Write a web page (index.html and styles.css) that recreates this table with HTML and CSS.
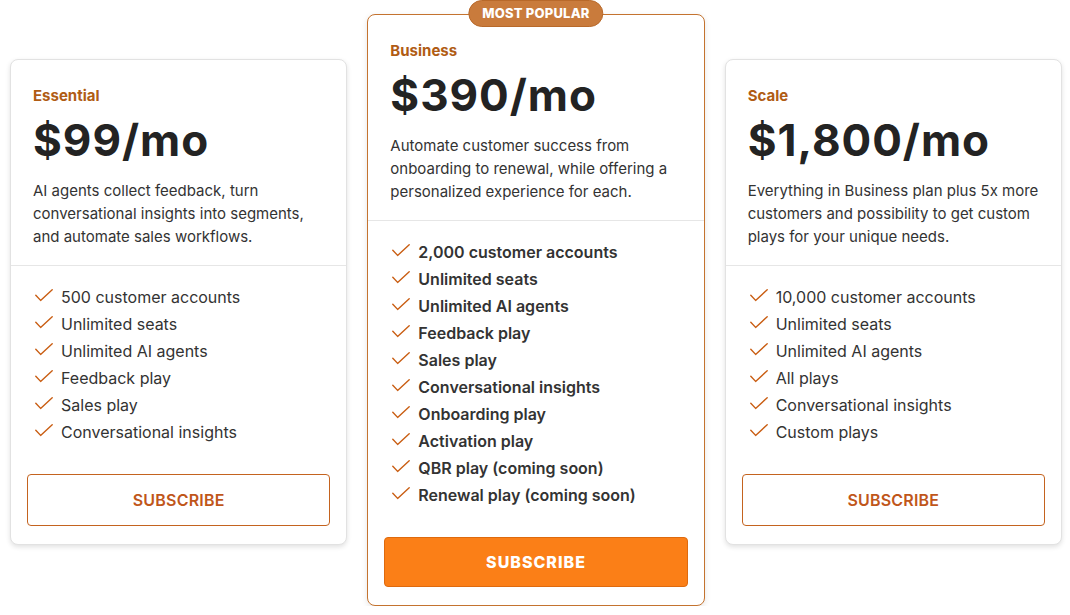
FILE: index.html
```html
<!DOCTYPE html>
<html lang="en">
<head>
<meta charset="utf-8">
<title>Pricing</title>
<link rel="stylesheet" href="styles.css">
</head>
<body>
<main class="plans">
  <section class="card side">
    <div class="head">
      <div class="tier">Essential</div>
      <div class="price">$99/mo</div>
      <p class="desc">AI agents collect feedback, turn conversational insights into segments, and automate sales workflows.</p>
    </div>
    <div class="body">
      <ul class="features">
        <li><svg class="chk" viewBox="0 0 18 13"><path d="M0.8 6.2 L5.6 11.4 L17.2 0.8"/></svg>500 customer accounts</li>
        <li><svg class="chk" viewBox="0 0 18 13"><path d="M0.8 6.2 L5.6 11.4 L17.2 0.8"/></svg>Unlimited seats</li>
        <li><svg class="chk" viewBox="0 0 18 13"><path d="M0.8 6.2 L5.6 11.4 L17.2 0.8"/></svg>Unlimited AI agents</li>
        <li><svg class="chk" viewBox="0 0 18 13"><path d="M0.8 6.2 L5.6 11.4 L17.2 0.8"/></svg>Feedback play</li>
        <li><svg class="chk" viewBox="0 0 18 13"><path d="M0.8 6.2 L5.6 11.4 L17.2 0.8"/></svg>Sales play</li>
        <li><svg class="chk" viewBox="0 0 18 13"><path d="M0.8 6.2 L5.6 11.4 L17.2 0.8"/></svg>Conversational insights</li>
      </ul>
      <button class="btn outline">SUBSCRIBE</button>
    </div>
  </section>

  <section class="card featured">
    <div class="badge">MOST POPULAR</div>
    <div class="head">
      <div class="tier">Business</div>
      <div class="price">$390/mo</div>
      <p class="desc">Automate customer success from onboarding to renewal, while offering a personalized experience for each.</p>
    </div>
    <div class="body">
      <ul class="features bold">
        <li><svg class="chk" viewBox="0 0 18 13"><path d="M0.8 6.2 L5.6 11.4 L17.2 0.8"/></svg>2,000 customer accounts</li>
        <li><svg class="chk" viewBox="0 0 18 13"><path d="M0.8 6.2 L5.6 11.4 L17.2 0.8"/></svg>Unlimited seats</li>
        <li><svg class="chk" viewBox="0 0 18 13"><path d="M0.8 6.2 L5.6 11.4 L17.2 0.8"/></svg>Unlimited AI agents</li>
        <li><svg class="chk" viewBox="0 0 18 13"><path d="M0.8 6.2 L5.6 11.4 L17.2 0.8"/></svg>Feedback play</li>
        <li><svg class="chk" viewBox="0 0 18 13"><path d="M0.8 6.2 L5.6 11.4 L17.2 0.8"/></svg>Sales play</li>
        <li><svg class="chk" viewBox="0 0 18 13"><path d="M0.8 6.2 L5.6 11.4 L17.2 0.8"/></svg>Conversational insights</li>
        <li><svg class="chk" viewBox="0 0 18 13"><path d="M0.8 6.2 L5.6 11.4 L17.2 0.8"/></svg>Onboarding play</li>
        <li><svg class="chk" viewBox="0 0 18 13"><path d="M0.8 6.2 L5.6 11.4 L17.2 0.8"/></svg>Activation play</li>
        <li><svg class="chk" viewBox="0 0 18 13"><path d="M0.8 6.2 L5.6 11.4 L17.2 0.8"/></svg>QBR play (coming soon)</li>
        <li><svg class="chk" viewBox="0 0 18 13"><path d="M0.8 6.2 L5.6 11.4 L17.2 0.8"/></svg>Renewal play (coming soon)</li>
      </ul>
      <button class="btn filled">SUBSCRIBE</button>
    </div>
  </section>

  <section class="card side">
    <div class="head">
      <div class="tier">Scale</div>
      <div class="price">$1,800/mo</div>
      <p class="desc">Everything in Business plan plus 5x more customers and possibility to get custom plays for your unique needs.</p>
    </div>
    <div class="body">
      <ul class="features">
        <li><svg class="chk" viewBox="0 0 18 13"><path d="M0.8 6.2 L5.6 11.4 L17.2 0.8"/></svg>10,000 customer accounts</li>
        <li><svg class="chk" viewBox="0 0 18 13"><path d="M0.8 6.2 L5.6 11.4 L17.2 0.8"/></svg>Unlimited seats</li>
        <li><svg class="chk" viewBox="0 0 18 13"><path d="M0.8 6.2 L5.6 11.4 L17.2 0.8"/></svg>Unlimited AI agents</li>
        <li><svg class="chk" viewBox="0 0 18 13"><path d="M0.8 6.2 L5.6 11.4 L17.2 0.8"/></svg>All plays</li>
        <li><svg class="chk" viewBox="0 0 18 13"><path d="M0.8 6.2 L5.6 11.4 L17.2 0.8"/></svg>Conversational insights</li>
        <li><svg class="chk" viewBox="0 0 18 13"><path d="M0.8 6.2 L5.6 11.4 L17.2 0.8"/></svg>Custom plays</li>
      </ul>
      <button class="btn outline">SUBSCRIBE</button>
    </div>
  </section>
</main>
</body>
</html>
```

FILE: styles.css
```css
* { box-sizing: border-box; }

html, body {
  margin: 0;
  background: #ffffff;
}

body {
  font-family: Inter, "Noto Sans", "Liberation Sans", sans-serif;
  color: #2a2a2a;
}

.plans {
  display: flex;
  align-items: flex-start;
  gap: 20px;
  padding: 14px 8px 0 10px;
}

.card {
  position: relative;
  flex: 1 1 0;
  min-width: 0;
  background: #fff;
  border: 1px solid #e2e2e2;
  border-radius: 8px;
  box-shadow: 0 2px 5px rgba(0, 0, 0, 0.12);
}

.card.side {
  margin-top: 45px;
}

.card.featured {
  border-color: #c4732f;
  box-shadow: 0 2px 6px rgba(0, 0, 0, 0.10);
}

.badge {
  position: absolute;
  top: -15px;
  left: 50%;
  transform: translateX(-50%);
  height: 27px;
  padding: 0 13px;
  border-radius: 14px;
  background: #c97b3c;
  border: 1px solid #b8692a;
  color: #fff;
  font-size: 13px;
  font-weight: 800;
  line-height: 25px;
  letter-spacing: 0.2px;
  white-space: nowrap;
}

.head {
  padding: 25px 16px 17px 22px;
  border-bottom: 1px solid #e6e6e6;
}

.tier {
  font-size: 15px;
  font-weight: 700;
  line-height: 22px;
  color: #b05c14;
}

.price {
  margin-top: 7px;
  font-size: 44px;
  font-weight: 650;
  line-height: 52px;
  letter-spacing: 1px;
  color: #232323;
}

.desc {
  margin: 13px 0 0;
  font-size: 15px;
  line-height: 23px;
  color: #333;
}

.body {
  padding: 17px 16px 18px;
}

.features {
  list-style: none;
  margin: 0;
  padding: 0 0 0 7px;
}

.features li {
  display: flex;
  align-items: center;
  height: 27px;
  font-size: 16px;
  color: #333;
}

.features.bold li {
  font-weight: 600;
}

.chk {
  width: 18px;
  height: 13px;
  margin: -2px 8px 0 1px;
  flex: none;
}

.chk path {
  fill: none;
  stroke: #c95d12;
  stroke-width: 1.4;
  stroke-linecap: round;
  stroke-linejoin: round;
}

.btn {
  display: block;
  width: 100%;
  font-family: inherit;
  cursor: pointer;
  border-radius: 4px;
}

.btn.outline {
  height: 52px;
  margin-top: 29px;
  background: #fff;
  border: 1px solid #c4631f;
  color: #c0561a;
  font-size: 16px;
  font-weight: 600;
  letter-spacing: 0.2px;
}

.btn.filled {
  height: 50px;
  margin-top: 29px;
  background: #fb7f17;
  border: 1px solid #de6a0e;
  color: #fff;
  font-size: 16px;
  font-weight: 800;
  letter-spacing: 1px;
}
```
